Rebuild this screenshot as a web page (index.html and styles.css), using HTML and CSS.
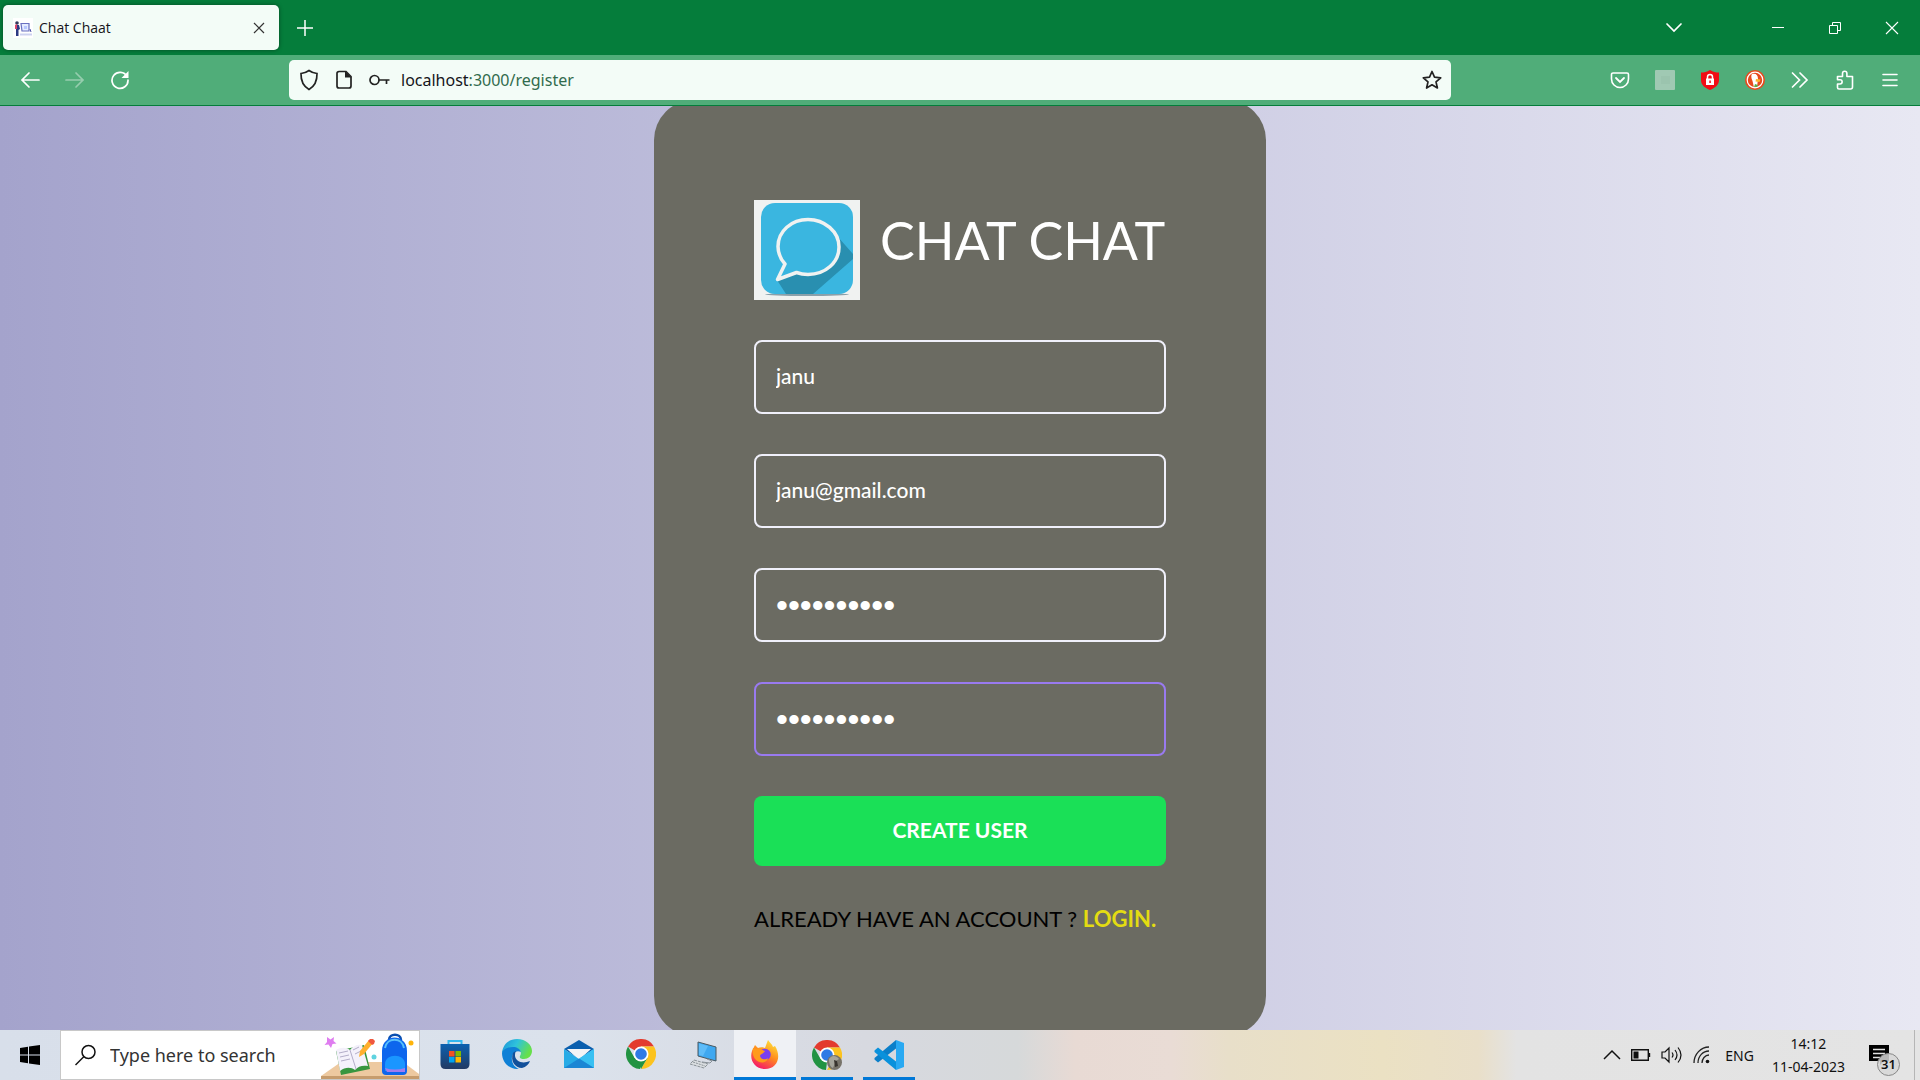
FILE: index.html
```html
<!DOCTYPE html>
<html lang="en">
<head>
<meta charset="utf-8">
<title>Chat Chaat</title>
<link rel="stylesheet" href="styles.css">
</head>
<body>
<div class="screen">
  <header class="browser">
    <div class="tabs">
      <div class="tab">
        <svg class="favicon" viewBox="0 0 20 20"><rect width="20" height="20" fill="#fff"/><circle cx="4" cy="5" r="1.800" fill="#333a5c"/><path d="M3 7h3l1 4-1.500 1v6H3z" fill="#2c3a82"/><path d="M2 7l2-1v5H2z" fill="#d9486b"/><path d="M8 5.500h8V13H9z" fill="#e4ebff" stroke="#6a70c0" stroke-width="1.200"/><path d="M11 8h3v3h-3z" fill="#b7c6ff"/><path d="M7 16.500h12" stroke="#cdd2f0" stroke-width="2"/><path d="M17 11l1 3" stroke="#4b50a8"/></svg>
        <span class="tab-title">Chat Chaat</span>
        <button class="icon-btn tab-close" aria-label="Close tab"><svg width="12" height="12" viewBox="0 0 12 12"><path d="M1 1l10 10M11 1L1 11" stroke="#333" stroke-width="1.200"/></svg></button>
      </div>
      <button class="icon-btn new-tab" aria-label="New tab"><svg width="16" height="16" viewBox="0 0 16 16"><path d="M8 0v16M0 8h16" stroke="#fff" stroke-width="1.500"/></svg></button>
      <div class="window-controls">
        <button class="icon-btn all-tabs" aria-label="List all tabs"><svg width="18" height="12" viewBox="0 0 18 12"><path d="M2 2l7 7 7-7" fill="none" stroke="#fff" stroke-width="1.700" stroke-linecap="round"/></svg></button>
        <button class="icon-btn" aria-label="Minimize"><svg width="14" height="14" viewBox="0 0 14 14"><path d="M1 6.500h12" stroke="#fff"/></svg></button>
        <button class="icon-btn" aria-label="Restore"><svg width="14" height="14" viewBox="0 0 14 14"><path d="M1.500 4.500h8v8h-8zM4.500 4.500v-3h8v8h-3" fill="none" stroke="#fff"/></svg></button>
        <button class="icon-btn" aria-label="Close"><svg width="14" height="14" viewBox="0 0 14 14"><path d="M1 1l12 12M13 1L1 13" stroke="#fff" stroke-width="1.100"/></svg></button>
      </div>
    </div>
    <div class="toolbar">
      <nav class="nav">
        <button class="icon-btn" aria-label="Back"><svg width="20" height="18" viewBox="0 0 20 18"><path d="M9 2L2 9l7 7M2 9h17" fill="none" stroke="#fff" stroke-width="1.700" stroke-linecap="round"/></svg></button>
        <button class="icon-btn faded" aria-label="Forward"><svg width="20" height="18" viewBox="0 0 20 18"><path d="M11 2l7 7-7 7M18 9H1" fill="none" stroke="#fff" stroke-width="1.700" stroke-linecap="round"/></svg></button>
        <button class="icon-btn" aria-label="Reload"><svg width="20" height="20" viewBox="0 0 20 20"><path d="M17 6.500A8 8 0 1 0 18 10" fill="none" stroke="#fff" stroke-width="1.700" stroke-linecap="round"/><path d="M18.500 1v7h-7z" fill="#fff"/></svg></button>
      </nav>
      <div class="urlbar">
        <svg width="20" height="22" viewBox="0 0 20 22"><path d="M10 1.500c2.500 1.800 5 2.700 8 3 .2 7-2 12.500-8 16-6-3.500-8.200-9-8-16 3-.3 5.500-1.200 8-3z" fill="none" stroke="#222" stroke-width="1.700"/></svg>
        <svg width="16" height="20" viewBox="0 0 16 20"><path d="M3 1.500h7l5 5V16a2 2 0 0 1-2 2H3a2 2 0 0 1-2-2V3.500a2 2 0 0 1 2-2z" fill="none" stroke="#222" stroke-width="1.700"/><path d="M9 1l6.500 6.500H9z" fill="#222"/></svg>
        <svg width="22" height="14" viewBox="0 0 22 14"><circle cx="5.500" cy="7" r="4.500" fill="none" stroke="#222" stroke-width="1.700"/><path d="M10 7h10.500M17.500 7v4" fill="none" stroke="#222" stroke-width="1.700"/></svg>
        <span class="url">localhost<span class="url-path">:3000/register</span></span>
        <button class="icon-btn star" aria-label="Bookmark"><svg width="20" height="20" viewBox="0 0 20 20"><path d="M10 1.500l2.500 5.700 6.200.6-4.700 4.100 1.400 6.100-5.400-3.200L4.600 18 6 11.900 1.300 7.800l6.200-.6z" fill="none" stroke="#222" stroke-width="1.700" stroke-linejoin="round"/></svg></button>
      </div>
      <div class="extensions">
        <button class="icon-btn" aria-label="Pocket"><svg width="20" height="20" viewBox="0 0 20 20"><path d="M3 3h14a1.500 1.500 0 0 1 1.500 1.500V9a8.500 8.500 0 0 1-17 0V4.500A1.500 1.500 0 0 1 3 3z" fill="none" stroke="#fff" stroke-width="1.600"/><path d="M6 8l4 4 4-4" fill="none" stroke="#fff" stroke-width="1.800" stroke-linecap="round"/></svg></button>
        <button class="icon-btn" aria-label="Extension"><svg width="20" height="20" viewBox="0 0 20 20"><rect width="20" height="20" rx="1" fill="#a0c9b3"/><rect x="6" y="6" width="9" height="8" fill="#9bc4ae"/></svg></button>
        <button class="icon-btn" aria-label="Password guard"><svg width="20" height="20" viewBox="0 0 20 20"><path d="M10 0c3 2 6 2.500 9 2.500V10c0 5-4 8-9 10-5-2-9-5-9-10V2.500C4 2.500 7 2 10 0z" fill="#f20d14"/><rect x="6" y="8.500" width="8" height="6.500" fill="#fff"/><path d="M7.500 9V7a2.500 2.500 0 0 1 5 0v2" fill="none" stroke="#fff" stroke-width="1.500"/><rect x="9.300" y="10.500" width="1.500" height="2.500" fill="#f20d14"/></svg></button>
        <button class="icon-btn" aria-label="DuckDuckGo"><svg width="20" height="20" viewBox="0 0 20 20"><circle cx="10" cy="10" r="10" fill="#e8491d"/><circle cx="10" cy="10" r="7.800" fill="none" stroke="#fff" stroke-width="1.200"/><path d="M7 4c4-1 6 1 6 5l-1 8-3 .5L7.500 11C6 8 6 5 7 4z" fill="#fff"/><path d="M11 9l4.500.5-1 2.500-4-.5z" fill="#fbb62b"/><path d="M10 14l3 1-1 2H9z" fill="#5bb04a"/></svg></button>
        <button class="icon-btn" aria-label="More tools"><svg width="20" height="20" viewBox="0 0 20 20"><path d="M2.500 3l7 7-7 7M10 3l7 7-7 7" fill="none" stroke="#fff" stroke-width="1.700" stroke-linecap="round"/></svg></button>
        <button class="icon-btn" aria-label="Extensions"><svg width="20" height="20" viewBox="0 0 20 20"><path d="M2.500 8V6.500h5V3.500a2.200 2.200 0 0 1 4.400 0v3h5.600V17a2 2 0 0 1-2 2H4a1.500 1.500 0 0 1-1.500-1.500V14H5a2 2 0 0 0 0-4.300H2.500z" fill="none" stroke="#fff" stroke-width="1.600" stroke-linejoin="round"/></svg></button>
        <button class="icon-btn" aria-label="Menu"><svg width="20" height="20" viewBox="0 0 20 20"><path d="M3 4.500h14M3 10h14M3 15.500h14" stroke="#fff" stroke-width="1.600" stroke-linecap="round"/></svg></button>
      </div>
    </div>
  </header>

  <main class="page">
    <form class="card">
      <div class="brand">
        <svg class="logo" width="106" height="100" viewBox="0 0 106 100"><rect width="106" height="100" fill="#f0f2f1"/><ellipse cx="53" cy="94.500" rx="42" ry="1.500" fill="#8aa0aa"/><rect x="7" y="3" width="92" height="91" rx="14" fill="#3ab6e0"/><path d="M84 37l15 17v5L59 94H32L23 80l20-7z" fill="#298fb0"/><path d="M23.500 79.500L31 64c-4.500-5-7-11-7-17.500C24 31 37.500 19.500 54 19.500S85 31.500 85 47 71.500 74.500 54 74.500c-4 0-8-.7-11.500-2z" fill="#3ab6e0" stroke="#f0f2f1" stroke-width="3.500" stroke-linejoin="round"/></svg>
        <h1>CHAT CHAT</h1>
      </div>
      <input class="field" type="text" aria-label="Username" value="janu">
      <input class="field" type="email" aria-label="Email" value="janu@gmail.com">
      <input class="field secret" type="password" aria-label="Password" value="password12">
      <input class="field secret active" type="password" aria-label="Confirm password" value="password12">
      <button class="submit" type="button">CREATE USER</button>
      <p class="login">ALREADY HAVE AN ACCOUNT ? <a href="#login">LOGIN.</a></p>
    </form>
  </main>

  <footer class="taskbar">
    <button class="icon-btn start" aria-label="Start"><svg width="20" height="20" viewBox="0 0 20 20"><path d="M0 3l8-1.200v7.700H0zM9 1.600L20 0v9.500H9zM0 10.500h8v7.700L0 17zM9 10.500h11V20L9 18.400z" fill="#000"/></svg></button>
    <div class="search">
      <svg width="22" height="22" viewBox="0 0 22 22"><circle cx="13.500" cy="8" r="6.500" fill="none" stroke="#111" stroke-width="1.500"/><path d="M9 12.500L0.500 21" stroke="#111" stroke-width="1.500"/></svg>
      <input type="text" aria-label="Search" placeholder="Type here to search">
      <svg class="art" width="98" height="48" viewBox="0 0 98 48"><path d="M0 45l20-14h62l16 12v5H0z" fill="#edc9a0"/><path d="M0 45h98v3H0z" fill="#c69c6d"/><path d="M6 6l3.500 2.500L13 6l-.5 4 3 2.500-4 .5-1.500 4-2.500-3.500-4 .5 2.500-3z" fill="#df7df0"/><circle cx="53" cy="26" r="2.500" fill="#5fd3e0"/><circle cx="90" cy="12" r="2.500" fill="#ffb40a"/><path d="M15 20l5 24 29-6-6-24z" fill="#37963f"/><path d="M15 19c5-3 10-3 14 0 3-4 7-6 12-5l6 21c-5-1-10 0-13 4-4-3-10-3-15 1z" fill="#f4f1fb"/><path d="M29 19l6 19M18 22l9-2M19 26l9-2M20 30l9-2M32 19l6-3M34 23l6-3" stroke="#b3adc9" fill="none"/><path d="M39 20l9-11 4 3-9 11-5 3z" fill="#ffb02e"/><path d="M47 10l2-2 3 0 2 2-1 3-2 1z" fill="#f0583e"/><path d="M68 9c0-7 12-7 12 0" fill="none" stroke="#0a4fb0" stroke-width="2.500"/><path d="M61 40V20c0-18 25-18 25 0v20q0 4-4 4H65q-4 0-4-4z" fill="#0d66ed"/><path d="M64 17c2-11 17-11 19 0" fill="none" stroke="#58c0fb" stroke-width="2"/><path d="M64 40v-7c0-11 20-11 20 0v7z" fill="#1a96ff"/><path d="M64 37q10 3 20 0v4H66z" fill="#a07bf0"/></svg>
    </div>
    <div class="apps">
      <button class="app" aria-label="Microsoft Store"><svg width="30" height="30" viewBox="0 0 30 30"><defs><linearGradient id="st" x2="0" y2="1"><stop stop-color="#0c61b0"/><stop offset="1" stop-color="#223a63"/></linearGradient></defs><path d="M8.500 6V2h13v4" fill="none" stroke="#35b7ee" stroke-width="2"/><path d="M0.500 5h29v20q0 5-5 5h-19q-5 0-5-5z" fill="url(#st)"/><path d="M9 12h5.500v5.500H9z" fill="#f25022"/><path d="M15.500 12H21v5.500h-5.500z" fill="#7fba00"/><path d="M9 18h5.500v5.500H9z" fill="#00a4ef"/><path d="M15.500 18H21v5.500h-5.500z" fill="#ffb900"/></svg></button>
      <button class="app" aria-label="Edge"><svg width="30" height="30" viewBox="0 0 30 30"><defs><linearGradient id="eg" x2="1" y2=".4"><stop stop-color="#1a8fd8"/><stop offset=".5" stop-color="#2fc3dc"/><stop offset="1" stop-color="#66e04a"/></linearGradient></defs><path d="M0 14C1 5 7 0 15 0c9 0 15 6 15 12 0 5-4 8-8 8-3 0-5-1-4-3 3-5-2-8-6-8-6 0-11 3-12 5z" fill="url(#eg)"/><path d="M0 14c1-4 6-6 11-6 4 0 7 2 8 5-4-2-8 0-9 5-1 6 3 11 7 11.800C8 31 0 24 0 14z" fill="#0f80d6"/><path d="M11 14c-3 8 2 15 9 15 4-1 7-4 8-7-7 3-14 1-15-5 0-2 0-3 1-5-1 0-2 1-3 2z" fill="#12509a"/></svg></button>
      <button class="app" aria-label="Mail"><svg width="30" height="30" viewBox="0 0 30 30"><path d="M0 10L15 1l15 9-15 10z" fill="#0a5fae"/><path d="M3 10h24L15 21z" fill="#f3f4f6"/><path d="M0 10l15 10 15-10v19H0z" fill="#27abe6"/><path d="M30 29L15 19.500 30 10z" fill="#38c0f2"/><path d="M30 29L15 19.500 8 24l-8 5z" fill="#1b86d4"/></svg></button>
      <button class="app" aria-label="Chrome"><svg width="30" height="30" viewBox="0 0 30 30"><path d="M15 15L2 7.500A15 15 0 0 1 28 7.500H15z" fill="#e33b2e"/><path d="M15 7.500h13A15 15 0 0 1 15 30l6.500-11.200z" fill="#fcc31e"/><path d="M2 7.500l6.500 11.300L15 22l-1 8A15 15 0 0 1 2 7.500z" fill="#229342"/><path d="M15 30l6.500-11.200L15 22l-4-1z" fill="#229342"/><circle cx="15" cy="15" r="7.500" fill="#fff"/><circle cx="15" cy="15" r="5.800" fill="#2f7ae5"/></svg></button>
      <button class="app" aria-label="This PC"><svg width="30" height="30" viewBox="0 0 30 30"><path d="M10 3l18 5v14l-18-5z" fill="#3fa8f0" stroke="#4b5961"/><path d="M11 4.500l9 2.500-5 10-4-1z" fill="#5fbcf8"/><path d="M19 20l5 2-2 2-8-1" fill="none" stroke="#879097"/><path d="M6 21l14 4-4 4-14-4z" fill="#d9dde0" stroke="#8b9398" stroke-dasharray="3 1"/><path d="M5 23l12 4" stroke="#8b9398" stroke-dasharray="2 1"/></svg></button>
      <button class="app current running" aria-label="Firefox"><svg width="30" height="30" viewBox="0 0 30 30"><defs><linearGradient id="ff" x1=".8" x2=".3" y2="1"><stop stop-color="#ffe63b"/><stop offset=".5" stop-color="#ff8a1f"/><stop offset="1" stop-color="#f5156c"/></linearGradient></defs><path d="M5 5l3 3c2-1 5-1 7 0l3-8c2 3 4 4 5 7l2-1c7 11 2 23-10 23C5 29-1 20 2 11z" fill="url(#ff)"/><circle cx="15" cy="14.500" r="5.800" fill="#7a3ff0"/><path d="M3 8l4 1c3-1 5 1 8 2-2 3-5 3-5 5 1 4 6 4 8 2-1 5-8 6-12 2-3-3-4-8-3-12z" fill="#ff9a1c"/></svg></button>
      <button class="app running" aria-label="Chrome profile"><svg width="30" height="30" viewBox="0 0 30 30"><path d="M15 15L2 7.500A15 15 0 0 1 28 7.500H15z" fill="#e33b2e"/><path d="M15 7.500h13A15 15 0 0 1 15 30l6.500-11.200z" fill="#fcc31e"/><path d="M2 7.500l6.500 11.300L15 22l-1 8A15 15 0 0 1 2 7.500z" fill="#229342"/><circle cx="15" cy="15" r="7.500" fill="#fff"/><circle cx="15" cy="15" r="5.800" fill="#2f7ae5"/><circle cx="22.500" cy="22.500" r="7.500" fill="#77736a"/><path d="M17 19c3-5 8-3 10 0l-3 2-3 7c-3-1-4-5-4-9z" fill="#a6a59c"/><path d="M22 20l3 1 1 5-3 1z" fill="#38342f"/></svg></button>
      <button class="app running" aria-label="Visual Studio Code"><svg width="30" height="30" viewBox="0 0 30 30"><path d="M22 0l8 3v24l-8 3z" fill="#29a9f2"/><path d="M22 0v8.500L4 22.500l-3.500-3v-1.500z" fill="#0b7fc9"/><path d="M22 30v-8.500L4 7.500l-3.500 3V12z" fill="#0991dc"/></svg></button>
    </div>
    <div class="tray">
      <svg width="18" height="12" viewBox="0 0 18 12"><path d="M1 10l8-8 8 8" fill="none" stroke="#111" stroke-width="1.500"/></svg>
      <svg width="20" height="12" viewBox="0 0 20 12"><path d="M.7.700h16.600v10.600H.7zM18.500 4v4" fill="none" stroke="#111" stroke-width="1.400"/><path d="M2.500 2.500h5v7h-5z" fill="#111"/></svg>
      <svg width="22" height="18" viewBox="0 0 22 18"><path d="M1 6h3l4-4v14l-4-4H1zM11 6.500q2 2.500 0 5M14 4q4 5 0 10M17 1.500q6 7.500 0 15" fill="none" stroke="#111" stroke-width="1.200"/></svg>
      <svg width="18" height="18" viewBox="0 0 18 18"><path d="M1 17C1 8 8 1 16 1M5 17C5 10 10 5 16 5M9 17c0-4 3-8 7-8" fill="none" stroke="#222" stroke-width="1.300"/><circle cx="14.500" cy="15.500" r="1.800" fill="#111"/></svg>
      <span class="lang">ENG</span>
      <div class="clock"><time>14:12</time><time>11-04-2023</time></div>
      <div class="notify">
        <svg width="20" height="20" viewBox="0 0 20 20"><path d="M0 0h20v16h-5l-4 4v-4H0z" fill="#000"/><path d="M4 4.500h12M4 8.500h12M4 12.500h7" stroke="#e3e3e3" stroke-width="1.500"/></svg>
        <span class="badge">31</span>
      </div>
    </div>
  </footer>
</div>
</body>
</html>
```
FILE: styles.css
```css
* { box-sizing: border-box; }
body { margin: 0; font-family: "Noto Sans", "Open Sans", sans-serif; }
svg { display: block; flex: none; }
.screen { height: 100vh; display: flex; flex-direction: column; overflow: hidden; }
.icon-btn { border: 0; padding: 0; background: none; display: flex; align-items: center; justify-content: center; }

.browser { flex: none; background: #50ad79; border-bottom: 1px solid #057d3b; }
.tabs { height: 55px; background: #057d3b; display: flex; align-items: center; padding: 0 21px 0 3px; }
.tab { width: 276px; height: 45px; background: #f3fcf7; border-radius: 5px; display: flex; align-items: center; gap: 6px; padding: 0 14px 0 10px; box-shadow: 0 0 4px rgba(0, 0, 0, .4); }
.favicon { width: 20px; height: 20px; }
.tab-title { font-size: 14px; color: #15141a; font-family: "Open Sans", sans-serif; }
.tab-close { margin-left: auto; }
.new-tab { margin-left: 18px; }
.window-controls { margin-left: auto; display: flex; align-items: center; gap: 43px; }
.all-tabs { margin-right: 45px; }

.toolbar { height: 50px; display: flex; align-items: center; }
.nav { width: 289px; display: flex; align-items: center; gap: 25px; padding-left: 20px; }
.faded { opacity: .4; }
.urlbar { flex: 1; height: 40px; background: #f3fcf7; border-radius: 5px; display: flex; align-items: center; gap: 17px; padding: 0 9px 0 10px; }
.url { font-size: 16px; color: #15141a; font-family: "Noto Sans", sans-serif; margin-left: -7px; }
.url-path { color: #316b4d; }
.star { margin-left: auto; }
.extensions { width: 469px; display: flex; justify-content: flex-end; gap: 25px; padding-right: 20px; }

.page { flex: 1; min-height: 0; overflow: hidden; display: flex; align-items: center; justify-content: center; background: linear-gradient(90deg, #a4a3cc, #e8e8f3); }
.card { flex: none; width: 612px; padding: 100px; border-radius: 40px; background: #6b6b62; display: flex; flex-direction: column; gap: 40px; font-family: Lato, sans-serif; }
.brand { display: flex; align-items: flex-start; gap: 20px; height: 100px; }
h1 { margin: 0; font-size: 52px; line-height: 80px; font-weight: 400; color: #fff; white-space: nowrap; }
.field { width: 100%; height: 74px; padding: 0 20px 4px; border: 2px solid #f0f0fa; border-radius: 8px; background: transparent; color: #fff; font: 500 21px Lato, sans-serif; outline: 0; }
.secret { padding-bottom: 0; font: 34px "Liberation Sans", sans-serif; }
.active { border-color: #997af0; }
.submit { height: 70px; padding: 0 0 4px; border: 0; border-radius: 8px; background: #1ae057; color: #fff; font: 700 21px Lato, sans-serif; }
.login { margin: 0 0 4px; font-size: 22px; line-height: 26px; color: #000; white-space: nowrap; }
.login a { color: #e3dc12; font-weight: 700; text-decoration: none; }

.taskbar { flex: none; height: 50px; display: flex; background: linear-gradient(90deg, #d8dfea 0%, #dbe2ec 30%, #d7d9e0 45%, #d6d9da 53%, #e8dad4 56%, #e9dcd5 61%, #e8dfc9 64%, #ebe1c3 72%, #e9dfc9 77%, #e3e3e3 79%, #e4e4e4 100%); }
.start { width: 60px; }
.search { width: 360px; border: 1px solid #c8c8c8; background: #fff; display: flex; align-items: center; padding-left: 14px; gap: 13px; }
.search input { flex: 1; min-width: 0; border: 0; padding: 0; background: none; outline: 0; font: 18px "Noto Sans", sans-serif; }
.search input::placeholder { color: #333; }
.apps { display: flex; margin-left: 4px; }
.app { width: 62px; border: 0; border-bottom: 3px solid transparent; padding: 0; background: none; display: flex; align-items: center; justify-content: center; }
.running { border: solid transparent; border-width: 0 5px; background: linear-gradient(#0078d7, #0078d7) bottom / 100% 3px no-repeat content-box; }
.current { border-width: 0; background: linear-gradient(#0078d7, #0078d7) bottom / 100% 3px no-repeat, #eff1f5; }
.tray { margin-left: auto; display: flex; align-items: center; gap: 10px; padding-right: 5px; font-size: 14px; color: #111; }
.lang { margin: 0 8px 0 4px; }
.clock { display: flex; flex-direction: column; align-items: center; line-height: 23px; }
.notify { position: relative; margin-left: 14px; padding-right: 25px; height: 50px; display: flex; align-items: center; border-right: 1px solid #b5b5b5; }
.badge { position: absolute; left: 8px; top: 23px; width: 23px; height: 23px; border: 1px solid #888; border-radius: 50%; background: rgba(215, 215, 215, .85); font-size: 13px; line-height: 21px; font-weight: 600; text-align: center; }
```
